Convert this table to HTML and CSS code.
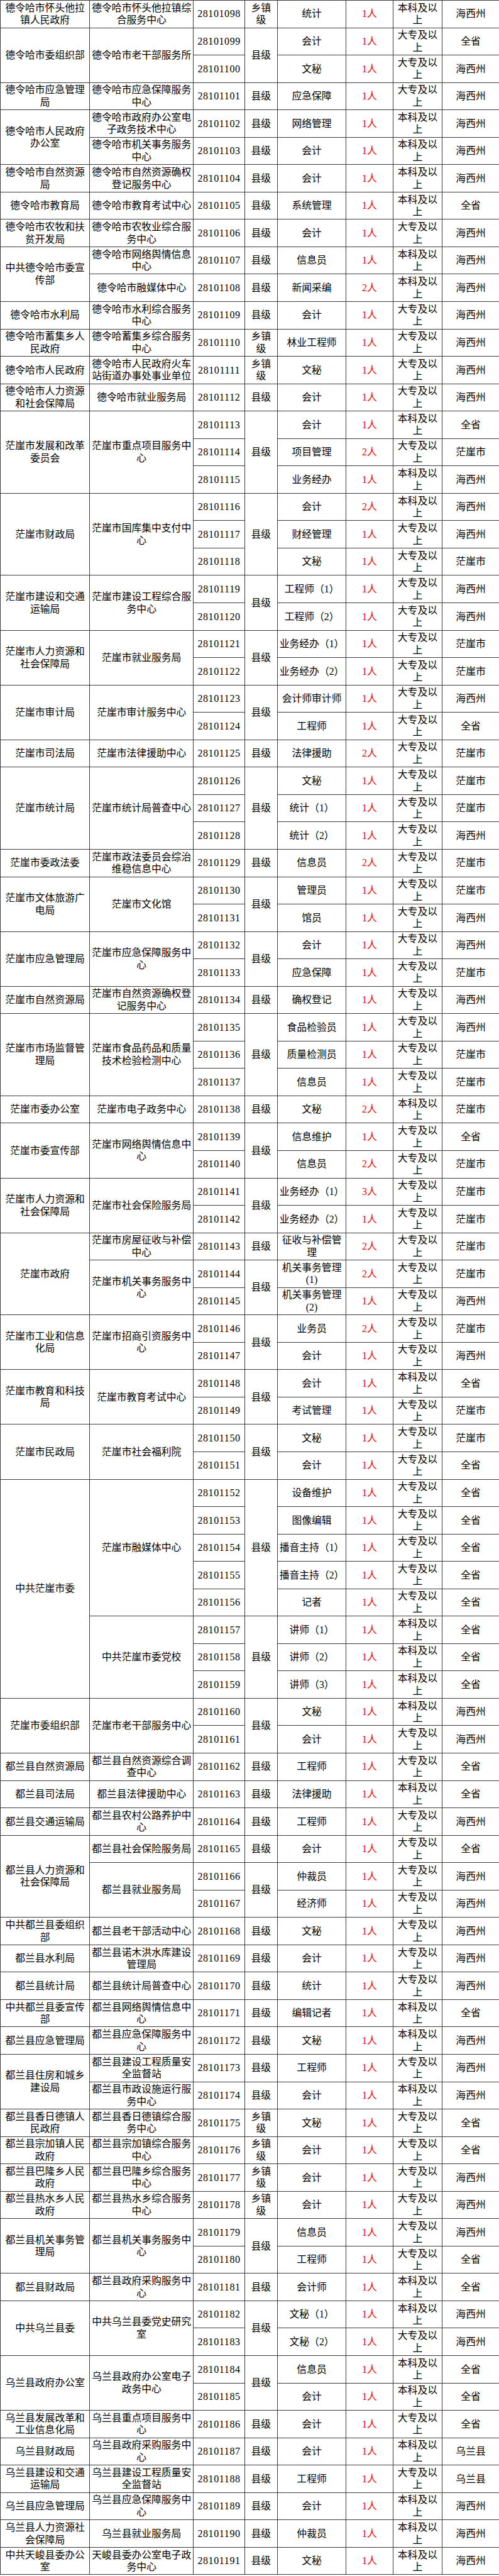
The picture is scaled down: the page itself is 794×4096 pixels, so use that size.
FILE: index.html
```html
<!DOCTYPE html>
<html lang="zh-CN">
<head>
<meta charset="utf-8">
<title>招聘岗位表</title>
<link rel="stylesheet" href="styles.css">
</head>
<body>
<table class="t">
<colgroup><col class="c1"><col class="c2"><col class="c3"><col class="c4"><col class="c5"><col class="c6"><col class="c7"><col class="c8"></colgroup>
<tbody>
<tr><td>德令哈市怀头他拉<br>镇人民政府</td><td>德令哈市怀头他拉镇综<br>合服务中心</td><td class="code">28101098</td><td>乡镇<br>级</td><td>统计</td><td class="n">1人</td><td>本科及以<br>上</td><td>海西州</td></tr>
<tr><td rowspan="2">德令哈市委组织部</td><td rowspan="2">德令哈市老干部服务所</td><td class="code">28101099</td><td rowspan="2">县级</td><td>会计</td><td class="n">1人</td><td>大专及以<br>上</td><td>全省</td></tr>
<tr><td class="code">28101100</td><td>文秘</td><td class="n">1人</td><td>大专及以<br>上</td><td>海西州</td></tr>
<tr><td>德令哈市应急管理<br>局</td><td>德令哈市应急保障服务<br>中心</td><td class="code">28101101</td><td>县级</td><td>应急保障</td><td class="n">1人</td><td>大专及以<br>上</td><td>海西州</td></tr>
<tr><td rowspan="2">德令哈市人民政府<br>办公室</td><td>德令哈市政府办公室电<br>子政务技术中心</td><td class="code">28101102</td><td>县级</td><td>网络管理</td><td class="n">1人</td><td>本科及以<br>上</td><td>海西州</td></tr>
<tr><td>德令哈市机关事务服务<br>中心</td><td class="code">28101103</td><td>县级</td><td>会计</td><td class="n">1人</td><td>本科及以<br>上</td><td>海西州</td></tr>
<tr><td>德令哈市自然资源<br>局</td><td>德令哈市自然资源确权<br>登记服务中心</td><td class="code">28101104</td><td>县级</td><td>会计</td><td class="n">1人</td><td>本科及以<br>上</td><td>海西州</td></tr>
<tr><td>德令哈市教育局</td><td>德令哈市教育考试中心</td><td class="code">28101105</td><td>县级</td><td>系统管理</td><td class="n">1人</td><td>本科及以<br>上</td><td>全省</td></tr>
<tr><td>德令哈市农牧和扶<br>贫开发局</td><td>德令哈市农牧业综合服<br>务中心</td><td class="code">28101106</td><td>县级</td><td>会计</td><td class="n">1人</td><td>大专及以<br>上</td><td>海西州</td></tr>
<tr><td rowspan="2">中共德令哈市委宣<br>传部</td><td>德令哈市网络舆情信息<br>中心</td><td class="code">28101107</td><td>县级</td><td>信息员</td><td class="n">1人</td><td>本科及以<br>上</td><td>海西州</td></tr>
<tr><td>德令哈市融媒体中心</td><td class="code">28101108</td><td>县级</td><td>新闻采编</td><td class="n">2人</td><td>本科及以<br>上</td><td>海西州</td></tr>
<tr><td>德令哈市水利局</td><td>德令哈市水利综合服务<br>中心</td><td class="code">28101109</td><td>县级</td><td>会计</td><td class="n">1人</td><td>大专及以<br>上</td><td>海西州</td></tr>
<tr><td>德令哈市蓄集乡人<br>民政府</td><td>德令哈蓄集乡综合服务<br>中心</td><td class="code">28101110</td><td>乡镇<br>级</td><td>林业工程师</td><td class="n">1人</td><td>大专及以<br>上</td><td>海西州</td></tr>
<tr><td>德令哈市人民政府</td><td>德令哈市人民政府火车<br>站街道办事处事业单位</td><td class="code">28101111</td><td>乡镇<br>级</td><td>文秘</td><td class="n">1人</td><td>大专及以<br>上</td><td>海西州</td></tr>
<tr><td>德令哈市人力资源<br>和社会保障局</td><td>德令哈市就业服务局</td><td class="code">28101112</td><td>县级</td><td>会计</td><td class="n">1人</td><td>大专及以<br>上</td><td>海西州</td></tr>
<tr><td rowspan="3">茫崖市发展和改革<br>委员会</td><td rowspan="3">茫崖市重点项目服务中<br>心</td><td class="code">28101113</td><td rowspan="3">县级</td><td>会计</td><td class="n">1人</td><td>本科及以<br>上</td><td>全省</td></tr>
<tr><td class="code">28101114</td><td>项目管理</td><td class="n">2人</td><td>大专及以<br>上</td><td>茫崖市</td></tr>
<tr><td class="code">28101115</td><td>业务经办</td><td class="n">1人</td><td>本科及以<br>上</td><td>海西州</td></tr>
<tr><td rowspan="3">茫崖市财政局</td><td rowspan="3">茫崖市国库集中支付中<br>心</td><td class="code">28101116</td><td rowspan="3">县级</td><td>会计</td><td class="n">2人</td><td>本科及以<br>上</td><td>海西州</td></tr>
<tr><td class="code">28101117</td><td>财经管理</td><td class="n">1人</td><td>大专及以<br>上</td><td>海西州</td></tr>
<tr><td class="code">28101118</td><td>文秘</td><td class="n">1人</td><td>大专及以<br>上</td><td>茫崖市</td></tr>
<tr><td rowspan="2">茫崖市建设和交通<br>运输局</td><td rowspan="2">茫崖市建设工程综合服<br>务中心</td><td class="code">28101119</td><td rowspan="2">县级</td><td>工程师（1）</td><td class="n">1人</td><td>大专及以<br>上</td><td>海西州</td></tr>
<tr><td class="code">28101120</td><td>工程师（2）</td><td class="n">1人</td><td>大专及以<br>上</td><td>海西州</td></tr>
<tr><td rowspan="2">茫崖市人力资源和<br>社会保障局</td><td rowspan="2">茫崖市就业服务局</td><td class="code">28101121</td><td rowspan="2">县级</td><td>业务经办（1）</td><td class="n">1人</td><td>大专及以<br>上</td><td>茫崖市</td></tr>
<tr><td class="code">28101122</td><td>业务经办（2）</td><td class="n">1人</td><td>大专及以<br>上</td><td>茫崖市</td></tr>
<tr><td rowspan="2">茫崖市审计局</td><td rowspan="2">茫崖市审计服务中心</td><td class="code">28101123</td><td rowspan="2">县级</td><td>会计师审计师</td><td class="n">1人</td><td>大专及以<br>上</td><td>海西州</td></tr>
<tr><td class="code">28101124</td><td>工程师</td><td class="n">1人</td><td>大专及以<br>上</td><td>全省</td></tr>
<tr><td>茫崖市司法局</td><td>茫崖市法律援助中心</td><td class="code">28101125</td><td>县级</td><td>法律援助</td><td class="n">2人</td><td>大专及以<br>上</td><td>茫崖市</td></tr>
<tr><td rowspan="3">茫崖市统计局</td><td rowspan="3">茫崖市统计局普查中心</td><td class="code">28101126</td><td rowspan="3">县级</td><td>文秘</td><td class="n">1人</td><td>大专及以<br>上</td><td>茫崖市</td></tr>
<tr><td class="code">28101127</td><td>统计（1）</td><td class="n">1人</td><td>大专及以<br>上</td><td>茫崖市</td></tr>
<tr><td class="code">28101128</td><td>统计（2）</td><td class="n">1人</td><td>大专及以<br>上</td><td>海西州</td></tr>
<tr><td>茫崖市委政法委</td><td>茫崖市政法委员会综治<br>维稳信息中心</td><td class="code">28101129</td><td>县级</td><td>信息员</td><td class="n">2人</td><td>大专及以<br>上</td><td>茫崖市</td></tr>
<tr><td rowspan="2">茫崖市文体旅游广<br>电局</td><td rowspan="2">茫崖市文化馆</td><td class="code">28101130</td><td rowspan="2">县级</td><td>管理员</td><td class="n">1人</td><td>大专及以<br>上</td><td>茫崖市</td></tr>
<tr><td class="code">28101131</td><td>馆员</td><td class="n">1人</td><td>大专及以<br>上</td><td>海西州</td></tr>
<tr><td rowspan="2">茫崖市应急管理局</td><td rowspan="2">茫崖市应急保障服务中<br>心</td><td class="code">28101132</td><td rowspan="2">县级</td><td>会计</td><td class="n">1人</td><td>大专及以<br>上</td><td>海西州</td></tr>
<tr><td class="code">28101133</td><td>应急保障</td><td class="n">1人</td><td>大专及以<br>上</td><td>茫崖市</td></tr>
<tr><td>茫崖市自然资源局</td><td>茫崖市自然资源确权登<br>记服务中心</td><td class="code">28101134</td><td>县级</td><td>确权登记</td><td class="n">1人</td><td>大专及以<br>上</td><td>海西州</td></tr>
<tr><td rowspan="3">茫崖市市场监督管<br>理局</td><td rowspan="3">茫崖市食品药品和质量<br>技术检验检测中心</td><td class="code">28101135</td><td rowspan="3">县级</td><td>食品检验员</td><td class="n">1人</td><td>大专及以<br>上</td><td>海西州</td></tr>
<tr><td class="code">28101136</td><td>质量检测员</td><td class="n">1人</td><td>大专及以<br>上</td><td>茫崖市</td></tr>
<tr><td class="code">28101137</td><td>信息员</td><td class="n">1人</td><td>大专及以<br>上</td><td>茫崖市</td></tr>
<tr><td>茫崖市委办公室</td><td>茫崖市电子政务中心</td><td class="code">28101138</td><td>县级</td><td>文秘</td><td class="n">2人</td><td>本科及以<br>上</td><td>茫崖市</td></tr>
<tr><td rowspan="2">茫崖市委宣传部</td><td rowspan="2">茫崖市网络舆情信息中<br>心</td><td class="code">28101139</td><td rowspan="2">县级</td><td>信息维护</td><td class="n">1人</td><td>大专及以<br>上</td><td>全省</td></tr>
<tr><td class="code">28101140</td><td>信息员</td><td class="n">2人</td><td>大专及以<br>上</td><td>茫崖市</td></tr>
<tr><td rowspan="2">茫崖市人力资源和<br>社会保障局</td><td rowspan="2">茫崖市社会保险服务局</td><td class="code">28101141</td><td rowspan="2">县级</td><td>业务经办（1）</td><td class="n">3人</td><td>大专及以<br>上</td><td>茫崖市</td></tr>
<tr><td class="code">28101142</td><td>业务经办（2）</td><td class="n">1人</td><td>大专及以<br>上</td><td>茫崖市</td></tr>
<tr><td rowspan="3">茫崖市政府</td><td>茫崖市房屋征收与补偿<br>中心</td><td class="code">28101143</td><td>县级</td><td>征收与补偿管<br>理</td><td class="n">2人</td><td>大专及以<br>上</td><td>茫崖市</td></tr>
<tr><td rowspan="2">茫崖市机关事务服务中<br>心</td><td class="code">28101144</td><td rowspan="2">县级</td><td>机关事务管理<br>(1)</td><td class="n">2人</td><td>大专及以<br>上</td><td>茫崖市</td></tr>
<tr><td class="code">28101145</td><td>机关事务管理<br>(2)</td><td class="n">1人</td><td>大专及以<br>上</td><td>海西州</td></tr>
<tr><td rowspan="2">茫崖市工业和信息<br>化局</td><td rowspan="2">茫崖市招商引资服务中<br>心</td><td class="code">28101146</td><td rowspan="2">县级</td><td>业务员</td><td class="n">2人</td><td>大专及以<br>上</td><td>茫崖市</td></tr>
<tr><td class="code">28101147</td><td>会计</td><td class="n">1人</td><td>大专及以<br>上</td><td>海西州</td></tr>
<tr><td rowspan="2">茫崖市教育和科技<br>局</td><td rowspan="2">茫崖市教育考试中心</td><td class="code">28101148</td><td rowspan="2">县级</td><td>会计</td><td class="n">1人</td><td>本科及以<br>上</td><td>全省</td></tr>
<tr><td class="code">28101149</td><td>考试管理</td><td class="n">1人</td><td>大专及以<br>上</td><td>茫崖市</td></tr>
<tr><td rowspan="2">茫崖市民政局</td><td rowspan="2">茫崖市社会福利院</td><td class="code">28101150</td><td rowspan="2">县级</td><td>文秘</td><td class="n">1人</td><td>大专及以<br>上</td><td>茫崖市</td></tr>
<tr><td class="code">28101151</td><td>会计</td><td class="n">1人</td><td>大专及以<br>上</td><td>全省</td></tr>
<tr><td rowspan="8">中共茫崖市委</td><td rowspan="5">茫崖市融媒体中心</td><td class="code">28101152</td><td rowspan="5">县级</td><td>设备维护</td><td class="n">1人</td><td>大专及以<br>上</td><td>全省</td></tr>
<tr><td class="code">28101153</td><td>图像编辑</td><td class="n">1人</td><td>大专及以<br>上</td><td>全省</td></tr>
<tr><td class="code">28101154</td><td>播音主持（1）</td><td class="n">1人</td><td>大专及以<br>上</td><td>全省</td></tr>
<tr><td class="code">28101155</td><td>播音主持（2）</td><td class="n">1人</td><td>大专及以<br>上</td><td>全省</td></tr>
<tr><td class="code">28101156</td><td>记者</td><td class="n">1人</td><td>大专及以<br>上</td><td>全省</td></tr>
<tr><td rowspan="3">中共茫崖市委党校</td><td class="code">28101157</td><td rowspan="3">县级</td><td>讲师（1）</td><td class="n">1人</td><td>本科及以<br>上</td><td>全省</td></tr>
<tr><td class="code">28101158</td><td>讲师（2）</td><td class="n">1人</td><td>本科及以<br>上</td><td>全省</td></tr>
<tr><td class="code">28101159</td><td>讲师（3）</td><td class="n">1人</td><td>本科及以<br>上</td><td>全省</td></tr>
<tr><td rowspan="2">茫崖市委组织部</td><td rowspan="2">茫崖市老干部服务中心</td><td class="code">28101160</td><td rowspan="2">县级</td><td>文秘</td><td class="n">1人</td><td>本科及以<br>上</td><td>海西州</td></tr>
<tr><td class="code">28101161</td><td>会计</td><td class="n">1人</td><td>大专及以<br>上</td><td>海西州</td></tr>
<tr><td>都兰县自然资源局</td><td>都兰县自然资源综合调<br>查中心</td><td class="code">28101162</td><td>县级</td><td>工程师</td><td class="n">1人</td><td>大专及以<br>上</td><td>全省</td></tr>
<tr><td>都兰县司法局</td><td>都兰县法律援助中心</td><td class="code">28101163</td><td>县级</td><td>法律援助</td><td class="n">1人</td><td>本科及以<br>上</td><td>全省</td></tr>
<tr><td>都兰县交通运输局</td><td>都兰县农村公路养护中<br>心</td><td class="code">28101164</td><td>县级</td><td>工程师</td><td class="n">1人</td><td>大专及以<br>上</td><td>海西州</td></tr>
<tr><td rowspan="3">都兰县人力资源和<br>社会保障局</td><td>都兰县社会保险服务局</td><td class="code">28101165</td><td>县级</td><td>会计</td><td class="n">1人</td><td>大专及以<br>上</td><td>全省</td></tr>
<tr><td rowspan="2">都兰县就业服务局</td><td class="code">28101166</td><td rowspan="2">县级</td><td>仲裁员</td><td class="n">1人</td><td>大专及以<br>上</td><td>海西州</td></tr>
<tr><td class="code">28101167</td><td>经济师</td><td class="n">1人</td><td>大专及以<br>上</td><td>海西州</td></tr>
<tr><td>中共都兰县委组织<br>部</td><td>都兰县老干部活动中心</td><td class="code">28101168</td><td>县级</td><td>文秘</td><td class="n">1人</td><td>大专及以<br>上</td><td>海西州</td></tr>
<tr><td>都兰县水利局</td><td>都兰县诺木洪水库建设<br>管理局</td><td class="code">28101169</td><td>县级</td><td>会计</td><td class="n">1人</td><td>大专及以<br>上</td><td>海西州</td></tr>
<tr><td>都兰县统计局</td><td>都兰县统计局普查中心</td><td class="code">28101170</td><td>县级</td><td>统计</td><td class="n">1人</td><td>大专及以<br>上</td><td>海西州</td></tr>
<tr><td>中共都兰县委宣传<br>部</td><td>都兰县网络舆情信息中<br>心</td><td class="code">28101171</td><td>县级</td><td>编辑记者</td><td class="n">1人</td><td>本科及以<br>上</td><td>全省</td></tr>
<tr><td>都兰县应急管理局</td><td>都兰县应急保障服务中<br>心</td><td class="code">28101172</td><td>县级</td><td>文秘</td><td class="n">1人</td><td>本科及以<br>上</td><td>海西州</td></tr>
<tr><td rowspan="2">都兰县住房和城乡<br>建设局</td><td>都兰县建设工程质量安<br>全监督站</td><td class="code">28101173</td><td>县级</td><td>工程师</td><td class="n">1人</td><td>大专及以<br>上</td><td>海西州</td></tr>
<tr><td>都兰县市政设施运行服<br>务中心</td><td class="code">28101174</td><td>县级</td><td>会计</td><td class="n">1人</td><td>本科及以<br>上</td><td>海西州</td></tr>
<tr><td>都兰县香日德镇人<br>民政府</td><td>都兰县香日德镇综合服<br>务中心</td><td class="code">28101175</td><td>乡镇<br>级</td><td>文秘</td><td class="n">1人</td><td>大专及以<br>上</td><td>全省</td></tr>
<tr><td>都兰县宗加镇人民<br>政府</td><td>都兰县宗加镇综合服务<br>中心</td><td class="code">28101176</td><td>乡镇<br>级</td><td>会计</td><td class="n">1人</td><td>大专及以<br>上</td><td>全省</td></tr>
<tr><td>都兰县巴隆乡人民<br>政府</td><td>都兰县巴隆乡综合服务<br>中心</td><td class="code">28101177</td><td>乡镇<br>级</td><td>会计</td><td class="n">1人</td><td>大专及以<br>上</td><td>海西州</td></tr>
<tr><td>都兰县热水乡人民<br>政府</td><td>都兰县热水乡综合服务<br>中心</td><td class="code">28101178</td><td>乡镇<br>级</td><td>会计</td><td class="n">1人</td><td>大专及以<br>上</td><td>海西州</td></tr>
<tr><td rowspan="2">都兰县机关事务管<br>理局</td><td rowspan="2">都兰县机关事务服务中<br>心</td><td class="code">28101179</td><td rowspan="2">县级</td><td>信息员</td><td class="n">1人</td><td>大专及以<br>上</td><td>海西州</td></tr>
<tr><td class="code">28101180</td><td>工程师</td><td class="n">1人</td><td>大专及以<br>上</td><td>全省</td></tr>
<tr><td>都兰县财政局</td><td>都兰县政府采购服务中<br>心</td><td class="code">28101181</td><td>县级</td><td>会计师</td><td class="n">1人</td><td>本科及以<br>上</td><td>全省</td></tr>
<tr><td rowspan="2">中共乌兰县委</td><td rowspan="2">中共乌兰县委党史研究<br>室</td><td class="code">28101182</td><td rowspan="2">县级</td><td>文秘（1）</td><td class="n">1人</td><td>本科及以<br>上</td><td>海西州</td></tr>
<tr><td class="code">28101183</td><td>文秘（2）</td><td class="n">1人</td><td>大专及以<br>上</td><td>海西州</td></tr>
<tr><td rowspan="2">乌兰县政府办公室</td><td rowspan="2">乌兰县政府办公室电子<br>政务中心</td><td class="code">28101184</td><td rowspan="2">县级</td><td>信息员</td><td class="n">1人</td><td>本科及以<br>上</td><td>全省</td></tr>
<tr><td class="code">28101185</td><td>会计</td><td class="n">1人</td><td>本科及以<br>上</td><td>全省</td></tr>
<tr><td>乌兰县发展改革和<br>工业信息化局</td><td>乌兰县重点项目服务中<br>心</td><td class="code">28101186</td><td>县级</td><td>会计</td><td class="n">1人</td><td>大专及以<br>上</td><td>全省</td></tr>
<tr><td>乌兰县财政局</td><td>乌兰县政府采购服务中<br>心</td><td class="code">28101187</td><td>县级</td><td>会计</td><td class="n">1人</td><td>本科及以<br>上</td><td>乌兰县</td></tr>
<tr><td>乌兰县建设和交通<br>运输局</td><td>乌兰县建设工程质量安<br>全监督站</td><td class="code">28101188</td><td>县级</td><td>工程师</td><td class="n">1人</td><td>大专及以<br>上</td><td>乌兰县</td></tr>
<tr><td>乌兰县应急管理局</td><td>乌兰县应急保障服务中<br>心</td><td class="code">28101189</td><td>县级</td><td>会计</td><td class="n">1人</td><td>本科及以<br>上</td><td>海西州</td></tr>
<tr><td>乌兰县人力资源社<br>会保障局</td><td>乌兰县就业服务局</td><td class="code">28101190</td><td>县级</td><td>仲裁员</td><td class="n">1人</td><td>本科及以<br>上</td><td>海西州</td></tr>
<tr><td>中共天峻县委办公<br>室</td><td>天峻县委办公室电子政<br>务中心</td><td class="code">28101191</td><td>县级</td><td>文秘</td><td class="n">1人</td><td>本科及以<br>上</td><td>海西州</td></tr>
</tbody>
</table>
</body>
</html>
```
FILE: styles.css
```css
html, body {
  margin: 0;
  padding: 0;
  background: #ffffff;
}

body {
  font-family: "Liberation Serif", "Noto Sans CJK SC", serif;
  font-size: 15.8px;
  color: #000000;
}

.t {
  width: 794px;
  border-collapse: collapse;
  table-layout: fixed;
}

.c1 { width: 142.2px; }
.c2 { width: 165.1px; }
.c3 { width: 81.5px; }
.c4 { width: 52.1px; }
.c5 { width: 109.4px; }
.c6 { width: 74.4px; }
.c7 { width: 78.5px; }
.c8 { width: 90.8px; }

.t tr {
  height: 43.55px;
}

.t td {
  border: 1px solid #3c3c3c;
  padding: 0 1px;
  text-align: center;
  vertical-align: middle;
  white-space: nowrap;
  line-height: 19.6px;
}

.t td.code {
  font-size: 16px;
  letter-spacing: 0.6px;
}

.t td.n {
  color: #ff0000;
}
```
